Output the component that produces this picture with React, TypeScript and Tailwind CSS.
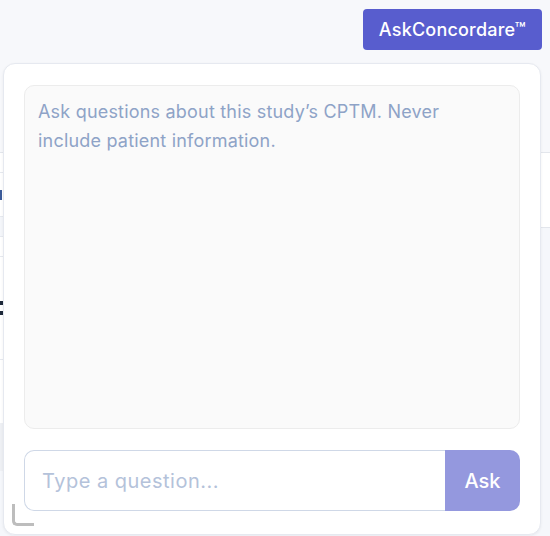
import React from "react";

export default function App() {
  return (
    <div className="relative w-[550px] h-[536px] overflow-hidden bg-[#f5f7fb]" style={{ fontFamily: "Inter, 'Noto Sans', sans-serif" }}>
      {/* Page behind the assistant panel */}
      <div className="h-[153px] bg-[#f7f8fb] border-b border-[#e3e6ec]" />
      <div className="flex">
        <div className="w-[40px] flex flex-col bg-white">
          <div className="h-[20px] border-b border-[#e6e9ef]" />
          <div className="h-[44px] border-b border-[#e6e9ef] flex items-center">
            <div className="w-[2px] h-[10px] bg-[#3b5b9a]" />
          </div>
          <div className="h-[20px] border-b border-[#e6e9ef] bg-[#f4f6fa]" />
          <div className="h-[20px] border-b border-[#e6e9ef]" />
          <div className="h-[102px] flex flex-col justify-center gap-[6px]">
            <div className="w-[3px] h-[4px] bg-[#1e293b]" />
            <div className="w-[3px] h-[4px] bg-[#1e293b]" />
          </div>
          <div className="h-[64px] border-t border-[#e6e9ef]" />
          <div className="h-[48px] bg-[#eef0f4]" />
        </div>
        <div className="flex-1">
          <div className="h-[75px] bg-white border-b border-[#e3e6ec]" />
        </div>
      </div>

      {/* Assistant toggle */}
      <button className="absolute right-[8px] top-[9px] h-[41px] px-[16px] rounded-[4px] bg-[#585dce] text-white text-[18px] font-medium tracking-[0.2px]">
        AskConcordare™
      </button>

      {/* Assistant panel */}
      <div className="absolute left-[3px] top-[63px] w-[538px] h-[472px] bg-white rounded-[12px] border border-[#e6e9f0] shadow-[0_1px_3px_rgba(15,23,42,0.06)] p-[20px] pt-[21px] flex flex-col gap-[21px]">
        <div className="flex-1 rounded-[10px] bg-[#fafafa] border border-[#ececec] pl-[13px] pr-[30px] py-[11px]">
          <p className="text-[#8ea3c7] text-[18px] leading-[29px] tracking-[0.2px]">
            Ask questions about this study’s CPTM. Never include patient information.
          </p>
        </div>
        <div className="flex h-[61px] mb-[3px]">
          <input
            className="flex-1 min-w-0 h-full rounded-l-[10px] border border-r-0 border-[#cfd8e7] px-[17px] text-[20px] tracking-[0.5px] text-[#334155] placeholder:text-[#b4c2da] outline-none"
            placeholder="Type a question..."
          />
          <button className="w-[75px] h-full rounded-r-[10px] bg-[#9498de] text-white text-[20px] font-medium">
            Ask
          </button>
        </div>

        {/* Resize handle */}
        <div className="absolute left-[8px] bottom-[8px] w-[22px] h-[22px] border-l-[3px] border-b-[3px] border-[#bdbdbd] rounded-bl-[5px]" />
      </div>
    </div>
  );
}
